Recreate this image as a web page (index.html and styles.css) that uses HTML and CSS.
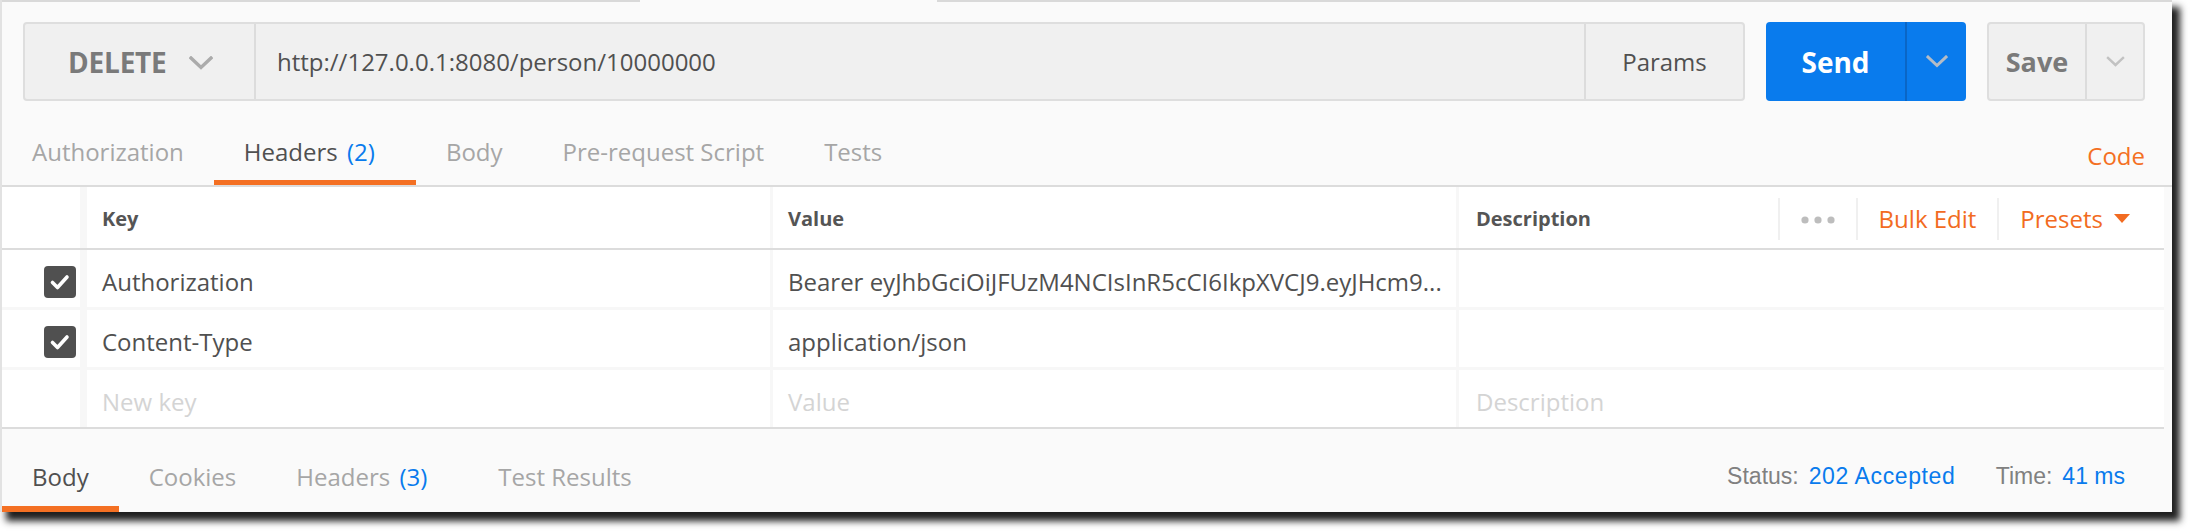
FILE: index.html
```html
<!DOCTYPE html>
<html lang="en">
<head>
<meta charset="utf-8">
<title>Postman request</title>
<link rel="stylesheet" href="styles.css">
</head>
<body>
<div class="window">
  <div class="topline"><span class="seg"></span><span class="gap"></span><span class="rest"></span></div>

  <div class="request-bar">
    <div class="url-group">
      <div class="method">
        <span class="method-label">DELETE</span>
        <svg class="chev chev-method" width="24" height="14" viewBox="0 0 24 14"><path d="M2 2 L12 11.5 L22 2" fill="none" stroke="#ababab" stroke-width="3.4" stroke-linecap="square"/></svg>
      </div>
      <div class="url">http://127.0.0.1:8080/person/10000000</div>
      <div class="params">Params</div>
    </div>
    <div class="send">
      <span class="send-main">Send</span>
      <span class="send-caret"><svg width="22" height="13" viewBox="0 0 22 13"><path d="M2 2 L11 10.5 L20 2" fill="none" stroke="#b4bcc6" stroke-width="3" stroke-linecap="square"/></svg></span>
    </div>
    <div class="save">
      <span class="save-main">Save</span>
      <span class="save-caret"><svg width="19" height="11" viewBox="0 0 19 11"><path d="M2 2 L9.5 9 L17 2" fill="none" stroke="#c2c2c2" stroke-width="2.4" stroke-linecap="square"/></svg></span>
    </div>
  </div>

  <div class="req-tabs">
    <span class="tab">Authorization</span>
    <span class="tab active">Headers <span class="count">(2)</span></span>
    <span class="tab">Body</span>
    <span class="tab">Pre-request Script</span>
    <span class="tab">Tests</span>
    <span class="code-link">Code</span>
  </div>

  <div class="htable">
    <div class="hrow head">
      <div class="cell c-check"></div>
      <div class="cell c-key">Key</div>
      <div class="cell c-val">Value</div>
      <div class="cell c-desc">
        <span>Description</span>
        <div class="actions">
          <span class="act dots"><svg width="34" height="8" viewBox="0 0 34 8"><circle cx="4" cy="4" r="3.6" fill="#bdbdbd"/><circle cx="17" cy="4" r="3.6" fill="#bdbdbd"/><circle cx="30" cy="4" r="3.6" fill="#bdbdbd"/></svg></span>
          <span class="act orange">Bulk Edit</span>
          <span class="act orange presets">Presets <svg width="16" height="9" viewBox="0 0 16 9"><path d="M0 0 H16 L8 9 Z" fill="#f26b21"/></svg></span>
        </div>
      </div>
    </div>
    <div class="hrow">
      <div class="cell c-check"><span class="cb"><svg width="32" height="32" viewBox="0 0 32 32"><path d="M8.5 16.5 L13.5 21.5 L23 11" fill="none" stroke="#fff" stroke-width="3.6" stroke-linecap="round" stroke-linejoin="round"/></svg></span></div>
      <div class="cell c-key">Authorization</div>
      <div class="cell c-val"><span class="ellip">Bearer eyJhbGciOiJFUzM4NCIsInR5cCI6IkpXVCJ9.eyJHcm9...</span></div>
      <div class="cell c-desc"></div>
    </div>
    <div class="hrow">
      <div class="cell c-check"><span class="cb"><svg width="32" height="32" viewBox="0 0 32 32"><path d="M8.5 16.5 L13.5 21.5 L23 11" fill="none" stroke="#fff" stroke-width="3.6" stroke-linecap="round" stroke-linejoin="round"/></svg></span></div>
      <div class="cell c-key">Content-Type</div>
      <div class="cell c-val">application/json</div>
      <div class="cell c-desc"></div>
    </div>
    <div class="hrow last">
      <div class="cell c-check"></div>
      <div class="cell c-key ph">New key</div>
      <div class="cell c-val ph">Value</div>
      <div class="cell c-desc ph">Description</div>
    </div>
  </div>

  <div class="resp-bar">
    <span class="tab active">Body</span>
    <span class="tab">Cookies</span>
    <span class="tab">Headers <span class="count">(3)</span></span>
    <span class="tab">Test Results</span>
    <div class="status">
      <span class="lbl">Status:</span><span class="val val-wide">202 Accepted</span>
      <span class="lbl time">Time:</span><span class="val">41 ms</span>
    </div>
  </div>
</div>
</body>
</html>
```

FILE: styles.css
```css
* { box-sizing: border-box; margin: 0; padding: 0; }

body {
  margin: 0;
  background: #ffffff;
  font-family: "Open Sans", "DejaVu Sans", sans-serif;
  width: 2192px;
  height: 532px;
  overflow: hidden;
  color: #505050;
}

.window {
  width: 2172px;
  height: 512px;
  background: #fafafa;
  border-left: 2px solid #e2e2e2;
  box-shadow: 7px 8px 7px 1px rgba(0, 0, 0, 0.88);
  display: flex;
  flex-direction: column;
}

/* top edge of the tab strip */
.topline { display: flex; height: 2px; flex: none; }
.topline .seg { width: 638px; background: #d9d9d9; }
.topline .gap { width: 297px; }
.topline .rest { flex: 1; background: #d9d9d9; }

/* request bar */
.request-bar {
  display: flex;
  height: 79px;
  margin: 20px 27px 0 21px;
  gap: 21px;
  flex: none;
}

.url-group {
  flex: 1;
  display: flex;
  background: #f0f0f0;
  border: 2px solid #dedede;
  border-radius: 4px;
}

.method {
  width: 231px;
  display: flex;
  align-items: center;
  padding-left: 43px;
  border-right: 2px solid #dcdcdc;
  gap: 22px;
}
.method-label {
  font-size: 28px;
  font-weight: 700;
  color: #7a7a7a;
  letter-spacing: -0.2px;
}
.chev-method { margin-top: 2px; }

.url {
  flex: 1;
  display: flex;
  align-items: center;
  padding-left: 21px;
  font-size: 24px;
  color: #505050;
}

.params {
  width: 159px;
  display: flex;
  align-items: center;
  justify-content: center;
  border-left: 2px solid #dcdcdc;
  font-size: 24px;
  color: #505050;
}

.send {
  width: 200px;
  display: flex;
  background: #097bed;
  border-radius: 4px;
}
.send-main {
  flex: 1;
  display: flex;
  align-items: center;
  justify-content: center;
  font-size: 28px;
  font-weight: 700;
  color: #ffffff;
}
.send-caret {
  width: 61px;
  display: flex;
  align-items: center;
  justify-content: center;
  border-left: 2px solid #0a66c6;
}

.save {
  width: 158px;
  display: flex;
  background: #f0f0f0;
  border: 2px solid #dedede;
  border-radius: 4px;
}
.save-main {
  width: 96px;
  display: flex;
  align-items: center;
  justify-content: center;
  font-size: 27px;
  font-weight: 700;
  color: #7a7a7a;
}
.save-caret {
  flex: 1;
  display: flex;
  align-items: center;
  justify-content: center;
  border-left: 2px solid #dcdcdc;
}

/* request tabs */
.req-tabs {
  display: flex;
  height: 86px;
  border-bottom: 2px solid #dcdcdc;
  flex: none;
  padding-right: 27px;
}
.tab {
  position: relative;
  padding: 34px 30px 0;
  font-size: 24px;
  line-height: 33px;
  color: #a6a6a6;
  white-space: nowrap;
}
.tab.active { color: #505050; }
.tab.active::after {
  content: "";
  position: absolute;
  left: 0;
  right: 0;
  bottom: 0;
  height: 5px;
  background: #f47023;
}
.count { color: #097bed; margin-left: 3px; margin-right: 11px; }
.code-link {
  margin-left: auto;
  padding-top: 38px;
  font-size: 24px;
  line-height: 33px;
  color: #f47023;
}

/* headers table */
.htable {
  flex: none;
  margin-right: 8px;
  background: #f7f7f7;
  display: flex;
  flex-direction: column;
}
.hrow {
  display: flex;
  height: 60px;
  border-bottom: 3px solid #f7f7f7;
}
.hrow.head {
  height: 63px;
  border-bottom: 2px solid #dcdcdc;
}
.hrow.last {
  height: 59px;
  border-bottom: 2px solid #dcdcdc;
}
.cell {
  background: #ffffff;
  display: flex;
  align-items: center;
  font-size: 24px;
  color: #505050;
  white-space: nowrap;
  overflow: hidden;
}
.hrow:not(.head) .cell { padding-top: 6px; }
.hrow.head .cell {
  font-size: 20px;
  font-weight: 700;
  color: #555555;
}
.hrow.head .c-key, .hrow.head .c-val, .hrow.head .c-desc { padding-top: 2px; }
.c-check {
  width: 85px;
  justify-content: flex-end;
  padding-right: 4px;
  border-right: 7px solid #f7f7f7;
}
.c-key {
  width: 686px;
  padding-left: 15px;
  border-right: 3px solid #f7f7f7;
}
.c-val {
  width: 686px;
  padding-left: 15px;
  border-right: 3px solid #f7f7f7;
}
.c-desc {
  flex: 1;
  padding-left: 17px;
}
.ph { color: #d4d4d4 !important; }
.ellip { overflow: hidden; }

.cb {
  width: 32px;
  height: 32px;
  border-radius: 4px;
  background: #505050;
  display: flex;
}

.actions {
  margin-left: auto;
  display: flex;
  align-items: center;
  padding-right: 34px;
  height: 100%;
}
.act {
  display: flex;
  align-items: center;
  height: 42px;
  padding: 0 21px;
  border-left: 2px solid #f0f0f0;
  font-weight: 400;
  font-size: 24px;
}
.act.dots { padding-top: 2px; }
.orange { color: #f26b21; }
.presets { gap: 11px; padding-right: 0; }

/* response bar */
.resp-bar {
  flex: 1;
  display: flex;
  padding-right: 47px;
}
.resp-bar .tab { padding-top: 31px; }
.resp-bar .tab.active::after { height: 6px; }
.status {
  margin-left: auto;
  padding-top: 33px;
  font-family: "Liberation Sans", Arial, sans-serif;
  font-size: 23px;
  line-height: 28px;
  white-space: nowrap;
}
.status .lbl { color: #808080; margin-right: 10px; }
.status .val { color: #097bed; }
.status .val-wide { letter-spacing: 0.6px; }
.status .time { margin-left: 34px; }
```
